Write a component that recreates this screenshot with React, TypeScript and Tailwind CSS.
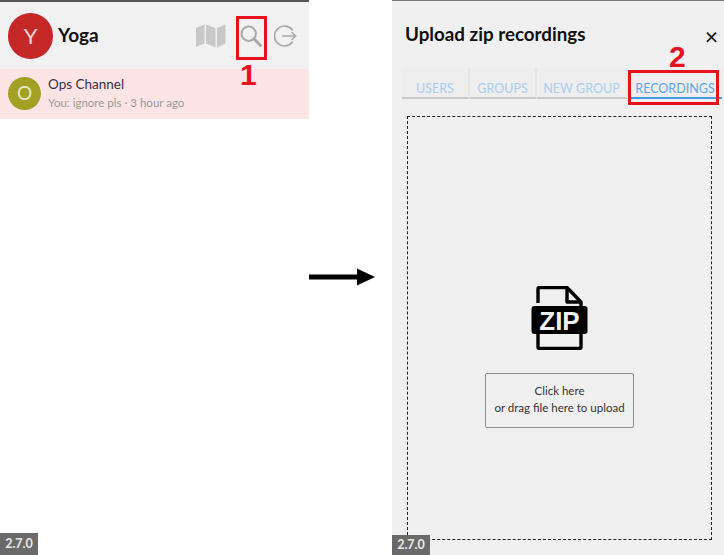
import React from "react";

const font = { fontFamily: '"Lato", "Noto Sans", sans-serif' };

function MapIcon() {
  return (
    <svg width="30" height="24" viewBox="0 0 30 24" className="block">
      <path d="M0 4 L8.5 0.5 V19.5 L0 23 Z M10 0.5 L19.5 4 V23.5 L10 19.5 Z M21 4 L29.5 0.5 V19.5 L21 23.5 Z" fill="#c8c8c8" />
    </svg>
  );
}

function SearchIcon() {
  return (
    <svg width="22" height="22" viewBox="0 0 22 22" fill="none" stroke="#a9a9a9" className="block">
      <circle cx="8.7" cy="8.7" r="7.2" strokeWidth="2" />
      <path d="M13.9 13.9 L20.5 20.5" strokeWidth="3" strokeLinecap="round" />
    </svg>
  );
}

function ExitIcon() {
  return (
    <svg width="23" height="22" viewBox="0 0 23 22" fill="none" stroke="#a9a9a9" strokeWidth="1.7" className="block">
      <path d="M18.6 5.2 A10 10 0 1 0 18.6 16.8" />
      <path d="M8 11 H21.5 M17.5 7 L21.5 11 L17.5 15" />
    </svg>
  );
}

function ZipIcon() {
  return (
    <svg width="57" height="64" viewBox="0 0 57 64" className="block">
      <path d="M7 17 V3 Q7 1.5 8.500 1.500 H36 L50 16 V61 Q50 62.500 48.500 62.500 H8.500 Q7 62.500 7 61 V45" fill="#f0f0f0" stroke="#000" strokeWidth="3.400" strokeLinejoin="round" />
      <path d="M36 1.500 V16 H50" fill="none" stroke="#000" strokeWidth="3.400" strokeLinejoin="round" />
      <rect x="0.500" y="20" width="56" height="28" rx="3" fill="#000" />
      <text x="28.500" y="44" textAnchor="middle" fill="#f0f0f0" fontSize="26" fontWeight="700" fontFamily="Liberation Sans, sans-serif">ZIP</text>
    </svg>
  );
}

function Badge({ className }: { className: string }) {
  return (
    <div className={`absolute bottom-0 left-0 flex w-[38px] items-center justify-center bg-[#6a6a6a] text-[12.500px] font-bold text-[#e8e8e8] ${className}`}>
      2.7.0
    </div>
  );
}

function Tab({ label, width, active }: { label: string; width: string; active?: boolean }) {
  return (
    <div
      className={`flex h-full shrink-0 items-end justify-center pb-[1px] text-[12.500px] leading-[14px] ${width} ${
        active
          ? "border-b-2 border-[#3f9bea] text-[#5aa7ee]"
          : "border-r-2 border-b-2 border-r-[#e6e6e6] border-b-[#c9c9c9] text-[#a9cdf1]"
      }`}
    >
      {label}
    </div>
  );
}

export default function App() {
  return (
    <div className="flex h-[555px] w-[724px] overflow-hidden bg-white" style={font}>
      {/* left phone panel */}
      <div className="relative h-full w-[309px] shrink-0">
        <div className="h-[2px] bg-[#555555]" />
        <div className="flex h-[67px] items-center bg-[#f1f1f1] pr-[12px] pl-[8px]">
          <div className="flex h-[46px] w-[45px] items-center justify-center rounded-full bg-[#c62828] text-[22px] text-[#f3d6d6]">Y</div>
          <div className="ml-[5px] text-[19px] font-bold text-[#111111]">Yoga</div>
          <div className="ml-auto flex items-center">
            <MapIcon />
            <div className="ml-[14px]"><SearchIcon /></div>
            <div className="ml-[12px]"><ExitIcon /></div>
          </div>
        </div>
        <div className="flex h-[50px] items-center border-b border-[#eeeaea] bg-[#fee4e4] pb-[2px] pl-[8px]">
          <div className="mt-[2px] flex h-[33px] w-[33px] items-center justify-center rounded-full bg-[#a3a023] text-[19px] text-[#e9e9c8]">O</div>
          <div className="ml-[7px] flex flex-col">
            <div className="text-[13.500px] leading-[18px] text-[#333344]">Ops Channel</div>
            <div className="mt-[2px] text-[11.500px] leading-[16px] text-[#9a9a9a]">You: ignore pls · 3 hour ago</div>
          </div>
        </div>
        {/* annotation */}
        <div className="absolute top-[16px] left-[236px] h-[44px] w-[31px] border-[3px] border-[#e8111e]" />
        <div className="absolute top-[58px] left-[240px] text-[30px] leading-[34px] font-bold text-[#e8111e]" style={{ fontFamily: '"Liberation Sans", sans-serif' }}>1</div>
        <Badge className="h-[22px]" />
      </div>

      {/* arrow */}
      <div className="flex w-[83px] shrink-0 items-start pt-[268px]">
        <svg width="66" height="18" viewBox="0 0 66 18" className="block">
          <path d="M0 6.500 H48 V0.500 L66 9 L48 17.500 V11.500 H0 Z" fill="#000" />
        </svg>
      </div>

      {/* right dialog */}
      <div className="relative flex h-full flex-1 flex-col bg-[#f0f0f0]">
        <div className="h-[1px] bg-[#777777]" />
        <div className="flex h-[67px] items-start pt-[20px] pr-[5px] pl-[13px]">
          <div className="text-[18.800px] leading-[26px] font-bold text-[#111111]">Upload zip recordings</div>
          <div className="ml-auto pt-[3px] pr-[1px] text-[23px] leading-[24px] text-[#111111]">×</div>
        </div>
        <div className="ml-[10px] flex h-[31px] bg-[#eeeeee]">
          <Tab label="USERS" width="w-[68px]" />
          <Tab label="GROUPS" width="w-[67px]" />
          <Tab label="NEW GROUP" width="w-[91px]" />
          <Tab label="RECORDINGS" width="w-[94px]" active />
        </div>
        <div className="mt-[17px] ml-[15px] flex h-[424px] w-[305px] flex-col items-center border border-dashed border-[#222222] pt-[169px]">
          <ZipIcon />
          <div className="mt-[23px] flex h-[55px] w-[149px] flex-col items-center justify-center rounded-[2px] border border-[#8f8f8f] pb-[4px] text-[11.500px] leading-[17px] text-[#333333]">
            <div>Click here</div>
            <div>or drag file here to upload</div>
          </div>
        </div>
        {/* annotation */}
        <div className="absolute top-[70px] left-[236px] h-[35px] w-[91px] border-[3px] border-[#e8111e]" />
        <div className="absolute top-[40px] left-[277px] text-[30px] leading-[34px] font-bold text-[#e8111e]" style={{ fontFamily: '"Liberation Sans", sans-serif' }}>2</div>
        <Badge className="h-[20px]" />
      </div>
    </div>
  );
}
